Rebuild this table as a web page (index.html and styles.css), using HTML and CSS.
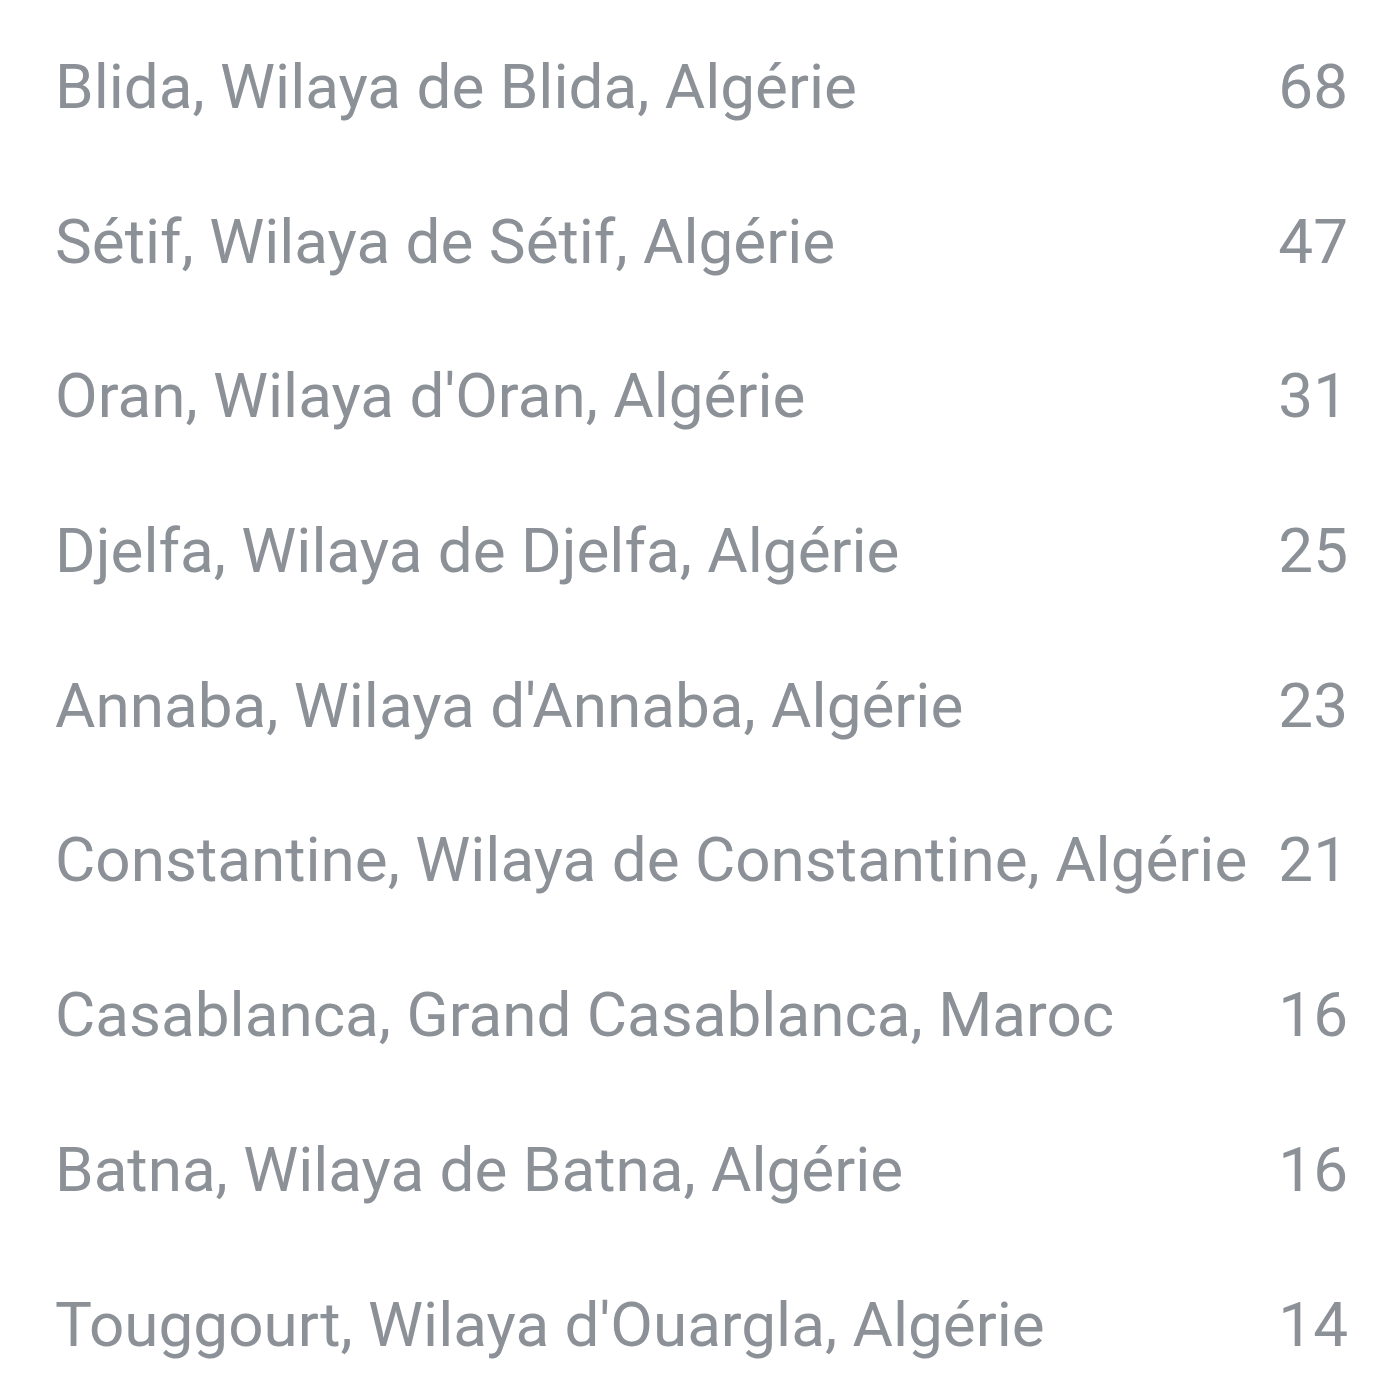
FILE: index.html
```html
<!DOCTYPE html>
<html lang="fr">
<head>
<meta charset="utf-8">
<link rel="stylesheet" href="styles.css">
</head>
<body>
<ul class="list">
  <li class="row"><span class="name">Blida, Wilaya de Blida, Algérie</span><span class="count">68</span></li>
  <li class="row"><span class="name">Sétif, Wilaya de Sétif, Algérie</span><span class="count">47</span></li>
  <li class="row"><span class="name">Oran, Wilaya d'Oran, Algérie</span><span class="count">31</span></li>
  <li class="row"><span class="name">Djelfa, Wilaya de Djelfa, Algérie</span><span class="count">25</span></li>
  <li class="row"><span class="name">Annaba, Wilaya d'Annaba, Algérie</span><span class="count">23</span></li>
  <li class="row"><span class="name">Constantine, Wilaya de Constantine, Algérie</span><span class="count">21</span></li>
  <li class="row"><span class="name">Casablanca, Grand Casablanca, Maroc</span><span class="count">16</span></li>
  <li class="row"><span class="name">Batna, Wilaya de Batna, Algérie</span><span class="count">16</span></li>
  <li class="row"><span class="name">Touggourt, Wilaya d'Ouargla, Algérie</span><span class="count">14</span></li>
</ul>
</body>
</html>
```
FILE: styles.css
```css
html, body {
  margin: 0;
  padding: 0;
  background: #ffffff;
}
.list {
  list-style: none;
  margin: 0;
  padding: 10px 52px 0 55px;
  font-family: Roboto, "Open Sans", sans-serif;
  font-size: 62px;
  color: #8c9198;
}
.row {
  display: flex;
  justify-content: space-between;
  align-items: baseline;
  gap: 20px;
  height: 154.7px;
  line-height: 154.7px;
}
.name {
  white-space: nowrap;
}
.count {
  white-space: nowrap;
}
```
